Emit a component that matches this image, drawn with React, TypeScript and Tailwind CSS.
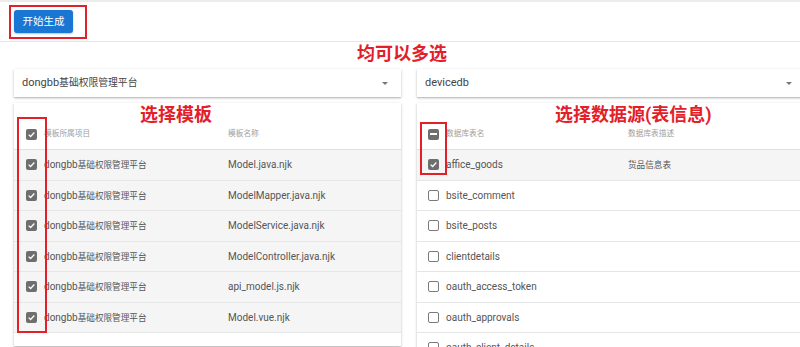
const FONT = "font-['Roboto','Noto_Sans_CJK_SC',sans-serif]";

type CheckState = "on" | "off" | "mixed";

// the screenshot's CJK glyphs run narrower than the latin ones, so they get their own size
function Mixed({ text, cjk }: { text: string; cjk: string }) {
  const parts = text.split(/([\u4e00-\u9fff]+)/).filter(Boolean);
  return (
    <>
      {parts.map((p, i) =>
        /[\u4e00-\u9fff]/.test(p) ? (
          <span key={i} className={cjk}>
            {p}
          </span>
        ) : (
          <span key={i}>{p}</span>
        ),
      )}
    </>
  );
}

function Box({ state }: { state: CheckState }) {
  if (state === "off") {
    return <span className="block w-[11px] h-[11px] shrink-0 rounded-[2px] border-[1.5px] border-[#7a7a7a] bg-white" />;
  }
  return (
    <span className="flex w-[11px] h-[11px] shrink-0 items-center justify-center rounded-[2px] bg-[#6e6e6e]">
      {state === "on" ? (
        <svg viewBox="0 0 12 12" className="w-[9px] h-[9px]">
          <path d="M2.2 6.2 L4.8 8.7 L9.8 3.4" fill="none" stroke="#fff" strokeWidth="1.7" />
        </svg>
      ) : (
        <span className="block w-[7px] h-[1.6px] bg-white" />
      )}
    </span>
  );
}

function SelectField({ value }: { value: string }) {
  return (
    <div className="flex h-[28px] items-center justify-between bg-white pl-[8px] pr-[13px] shadow-[0_1px_3px_rgba(0,0,0,0.2),0_1px_1px_rgba(0,0,0,0.12)]">
      <span className="text-[11px] text-[#444]">
        <Mixed text={value} cjk="text-[9.8px]" />
      </span>
      <span className="block w-0 h-0 border-l-[3px] border-r-[3px] border-t-[3px] border-l-transparent border-r-transparent border-t-[#777]" />
    </div>
  );
}

type Row = { a: string; b: string; on: boolean };

function Table({
  head,
  headState,
  rows,
  padLeft,
  col2,
}: {
  head: [string, string];
  headState: CheckState;
  rows: Row[];
  padLeft: string;
  col2: string;
}) {
  return (
    <div className="bg-white pt-[16px] pb-[13px] shadow-[0_1px_3px_rgba(0,0,0,0.2),0_1px_1px_rgba(0,0,0,0.12)]">
      <div className={`flex h-[31px] items-center border-b border-[#e0e0e0] ${padLeft}`}>
        <Box state={headState} />
        <span className={`ml-[7px] text-[7.7px] text-[#a0a0a0] ${col2}`}>{head[0]}</span>
        <span className="text-[7.7px] text-[#a0a0a0]">{head[1]}</span>
      </div>
      {rows.map((r) => (
        <div
          key={r.a}
          className={`flex h-[30.5px] items-center border-b border-[#e6e6e6] ${padLeft} ${r.on ? "bg-[#f5f5f5]" : "bg-white"}`}
        >
          <Box state={r.on ? "on" : "off"} />
          <span className={`ml-[7px] text-[10px] text-[#555] ${col2}`}>
            <Mixed text={r.a} cjk="text-[8.6px]" />
          </span>
          <span className="text-[10px] text-[#555]">
            <Mixed text={r.b} cjk="text-[8.6px]" />
          </span>
        </div>
      ))}
    </div>
  );
}

const templates: Row[] = [
  "Model.java.njk",
  "ModelMapper.java.njk",
  "ModelService.java.njk",
  "ModelController.java.njk",
  "api_model.js.njk",
  "Model.vue.njk",
].map((b) => ({ a: "dongbb基础权限管理平台", b, on: true }));

const tables: Row[] = [
  { a: "affice_goods", b: "货品信息表", on: true },
  { a: "bsite_comment", b: "", on: false },
  { a: "bsite_posts", b: "", on: false },
  { a: "clientdetails", b: "", on: false },
  { a: "oauth_access_token", b: "", on: false },
  { a: "oauth_approvals", b: "", on: false },
  { a: "oauth_client_details", b: "", on: false },
];

export default function App() {
  return (
    <div className={`relative w-[800px] h-[347px] overflow-hidden bg-white ${FONT}`}>
      <div className="h-[2px] bg-[#ececec]" />
      <div className="h-[40px] border-b border-[#e8e8e8] pl-[14px] pt-[6px]">
        <button className="h-[23px] w-[59px] rounded-[3px] bg-[#1976d2] text-[10.5px] text-white shadow-[0_1px_2px_rgba(0,0,0,0.25)]">
          开始生成
        </button>
      </div>

      <div className="flex gap-[16px] pl-[14px] pt-[27px]">
        <div className="flex w-[387px] shrink-0 flex-col gap-[6px]">
          <SelectField value="dongbb基础权限管理平台" />
          <Table
            head={["模板所属项目", "模板名称"]}
            headState="on"
            rows={templates}
            padLeft="pl-[12px]"
            col2="w-[184px]"
          />
        </div>
        <div className="flex w-[388px] shrink-0 flex-col gap-[6px]">
          <SelectField value="devicedb" />
          <Table
            head={["数据库表名", "数据库表描述"]}
            headState="mixed"
            rows={tables}
            padLeft="pl-[11px]"
            col2="w-[182px]"
          />
        </div>
      </div>

      {/* annotations */}
      <div className="absolute left-[9px] top-[5px] h-[34px] w-[78px] border-2 border-[#e3202a]" />
      <div className="absolute left-[357px] top-[42px] text-[18px] font-bold leading-[24px] text-[#e3202a]">均可以多选</div>
      <div className="absolute left-[140px] top-[103px] text-[18px] font-bold leading-[24px] text-[#e3202a]">选择模板</div>
      <div className="absolute left-[555px] top-[103px] text-[18px] font-bold leading-[24px] text-[#e3202a]">选择数据源(表信息)</div>
      <div className="absolute left-[17px] top-[117px] h-[216px] w-[30px] border-2 border-[#e3202a]" />
      <div className="absolute left-[420px] top-[122px] h-[53px] w-[27px] border-2 border-[#e3202a]" />
    </div>
  );
}
